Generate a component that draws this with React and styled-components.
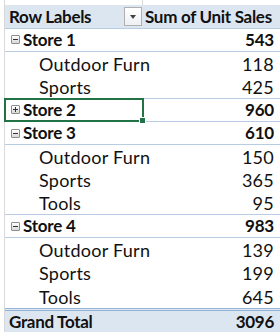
import React from 'react'
import styled, { createGlobalStyle, css } from 'styled-components'

const GlobalStyle = createGlobalStyle`
  html, body {
    margin: 0;
    padding: 0;
    background: #ffffff;
  }
  body {
    font-family: Lato, "Liberation Sans", Arial, sans-serif;
    color: #111111;
  }
`

const Sheet = styled.div`
  width: 280px;
  height: 332px;
  overflow: hidden;
  padding-left: 4px;
  box-sizing: border-box;
`

const Pivot = styled.div`
  border-left: 1px solid #d9d9d9;
  display: flex;
  flex-direction: column;
`

const Spacer = styled.div`
  height: 5.4px;
  display: grid;
  grid-template-columns: 138px 1fr;
  & > div:first-child {
    border-right: 1px solid #d9d9d9;
  }
`

const rowStyles = {
  header: css`
    background: #dce6f1;
    border-bottom: 1px solid #95b3d7;
    font-weight: 700;
    letter-spacing: -0.3px;
  `,
  store: css`
    font-weight: 700;
    letter-spacing: -0.2px;
    border-bottom: 1px solid #b8cce4;
    margin-top: -1px;
    border-top: 1px solid #b8cce4;
    height: 24.3px;
  `,
  item: css`
    font-weight: 400;
    font-size: 18px;
    letter-spacing: 0.25px;
  `,
  total: css`
    background: #dce6f1;
    border-top: 3px double #95b3d7;
    font-weight: 700;
    letter-spacing: -0.3px;
  `
}

const Row = styled.div`
  display: grid;
  grid-template-columns: 138px 1fr;
  height: 23.3px;
  box-sizing: border-box;
  font-size: 17px;
  line-height: 22px;
  ${({ $kind }) => rowStyles[$kind]}
`

const LabelCell = styled.div`
  position: relative;
  display: flex;
  align-items: center;
  padding-left: ${({ $indent }) => $indent}px;
  white-space: nowrap;
  ${({ $selected }) => $selected && css`
    &::after {
      content: '';
      position: absolute;
      left: -1px;
      top: -1px;
      right: -1px;
      bottom: -1px;
      border: 2px solid #217346;
      pointer-events: none;
    }
    &::before {
      content: '';
      position: absolute;
      right: -3px;
      bottom: -3px;
      width: 5px;
      height: 5px;
      background: #217346;
      border: 1px solid #ffffff;
      z-index: 2;
    }
  `}
`

const ValueCell = styled.div`
  display: flex;
  align-items: center;
  justify-content: ${({ $left }) => ($left ? 'flex-start' : 'flex-end')};
  padding: 0 6px 0 2px;
  white-space: nowrap;
`

const HeaderLabel = styled(LabelCell)`
  justify-content: space-between;
  padding-right: 1px;
`

const FilterButton = styled.div`
  width: 18px;
  height: 19px;
  box-sizing: border-box;
  border: 1px solid #b0b0b0;
  background: linear-gradient(#ffffff, #eef0f3);
  display: flex;
  align-items: center;
  justify-content: center;
  &::after {
    content: '';
    border-left: 3.5px solid transparent;
    border-right: 3.5px solid transparent;
    border-top: 4px solid #404040;
  }
`

const Toggle = styled.span`
  position: relative;
  width: 9px;
  height: 9px;
  box-sizing: border-box;
  border: 1px solid #8e8e8e;
  border-radius: 1px;
  background: linear-gradient(#ffffff, #d8d8d8);
  margin-right: 3px;
  flex: none;
  &::before {
    content: '';
    position: absolute;
    left: 1px;
    top: 3px;
    width: 5px;
    height: 1px;
    background: #333333;
  }
  ${({ $collapsed }) => $collapsed && css`
    &::after {
      content: '';
      position: absolute;
      left: 3px;
      top: 1px;
      width: 1px;
      height: 5px;
      background: #333333;
    }
  `}
`

const data = [
  { store: 'Store 1', total: 543, items: [['Outdoor Furn', 118], ['Sports', 425]] },
  { store: 'Store 2', total: 960, collapsed: true, items: [] },
  { store: 'Store 3', total: 610, items: [['Outdoor Furn', 150], ['Sports', 365], ['Tools', 95]] },
  { store: 'Store 4', total: 983, items: [['Outdoor Furn', 139], ['Sports', 199], ['Tools', 645]] }
]

const App = () => {
  return (
    <>
      <GlobalStyle />
      <Sheet>
        <Pivot>
          <Spacer><div /><div /></Spacer>
          <Row $kind="header">
            <HeaderLabel $indent={4}>
              Row Labels
              <FilterButton />
            </HeaderLabel>
            <ValueCell $left>Sum of Unit Sales</ValueCell>
          </Row>
          {data.map((s) => (
            <React.Fragment key={s.store}>
              <Row $kind="store">
                <LabelCell $indent={6} $selected={s.collapsed}>
                  <Toggle $collapsed={s.collapsed} />
                  {s.store}
                </LabelCell>
                <ValueCell>{s.total}</ValueCell>
              </Row>
              {s.items.map(([name, value]) => (
                <Row $kind="item" key={name}>
                  <LabelCell $indent={34}>{name}</LabelCell>
                  <ValueCell>{value}</ValueCell>
                </Row>
              ))}
            </React.Fragment>
          ))}
          <Row $kind="total">
            <LabelCell $indent={4}>Grand Total</LabelCell>
            <ValueCell>3096</ValueCell>
          </Row>
        </Pivot>
      </Sheet>
    </>
  )
}

export default App
